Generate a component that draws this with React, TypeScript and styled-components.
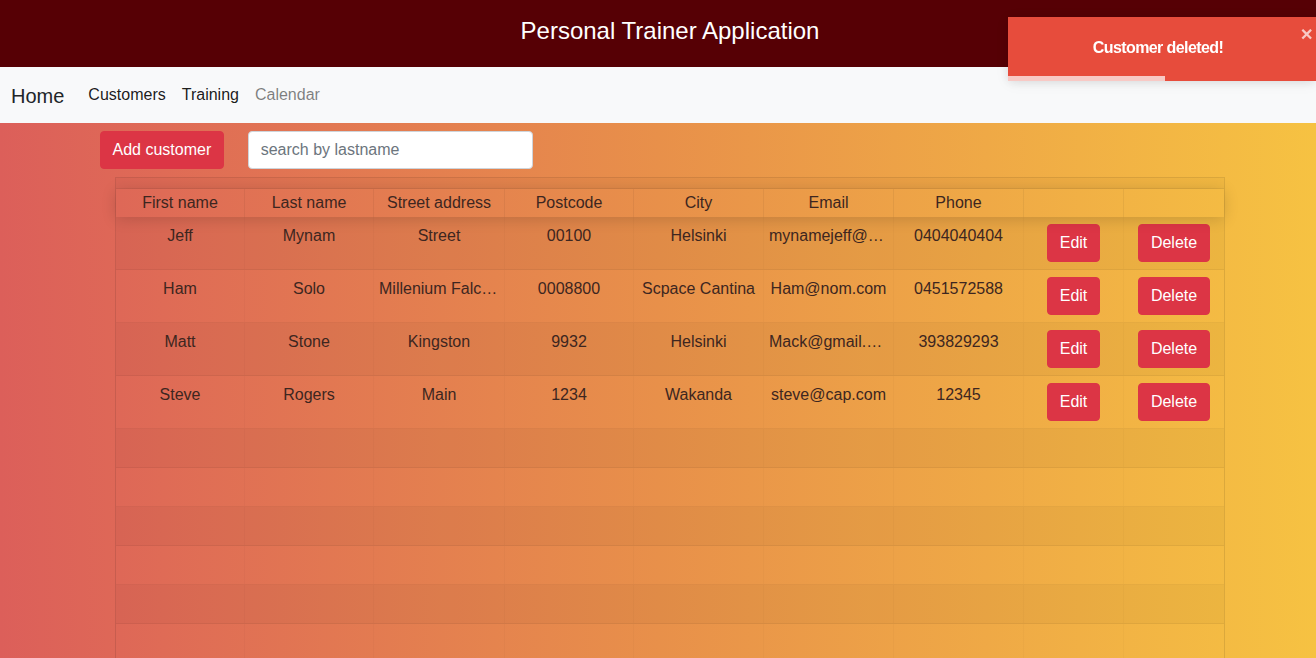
import { FC } from 'react';
import styled, { createGlobalStyle } from 'styled-components';

const GlobalStyle = createGlobalStyle`
  html, body {
    margin: 0;
    padding: 0;
    overflow: hidden;
  }
  body {
    font-family: "Liberation Sans", Arial, sans-serif;
    font-size: 16px;
    color: #212529;
  }
`;

type Customer = {
  firstname: string
  lastname: string
  street: string
  postcode: string
  city: string
  email: string
  phone: string
}

const customers: Customer[] = [
  { firstname: 'Jeff', lastname: 'Mynam', street: 'Street', postcode: '00100', city: 'Helsinki', email: 'mynamejeff@gmail.com', phone: '0404040404' },
  { firstname: 'Ham', lastname: 'Solo', street: 'Millenium Falcon', postcode: '0008800', city: 'Scpace Cantina', email: 'Ham@nom.com', phone: '0451572588' },
  { firstname: 'Matt', lastname: 'Stone', street: 'Kingston', postcode: '9932', city: 'Helsinki', email: 'Mack@gmail.com', phone: '393829293' },
  { firstname: 'Steve', lastname: 'Rogers', street: 'Main', postcode: '1234', city: 'Wakanda', email: 'steve@cap.com', phone: '12345' },
];

const columns = [
  { title: 'First name', width: 129 },
  { title: 'Last name', width: 129 },
  { title: 'Street address', width: 131 },
  { title: 'Postcode', width: 129 },
  { title: 'City', width: 130 },
  { title: 'Email', width: 130 },
  { title: 'Phone', width: 130 },
  { title: '', width: 100 },
  { title: '', width: 100 },
];

const Page = styled.div`
  min-height: 100vh;
  background: linear-gradient(to right, #dc5f5a 0%, #e8904a 50%, #f6c242 100%);
`;

const Header = styled.header`
  height: 67px;
  background-color: #560005;
  display: flex;
  align-items: center;
  justify-content: center;
  padding-left: 24px;
  box-sizing: border-box;

  h1 {
    margin: 0 0 6px;
    font-size: 24px;
    font-weight: 400;
    color: #ffffff;
  }
`;

const NavBar = styled.nav`
  height: 56px;
  background-color: #f8f9fa;
  display: flex;
  align-items: center;
  padding-left: 11px;

  .brand {
    font-size: 20px;
    color: #212529;
    margin-right: 16px;
    padding-top: 2px;
  }
`;

const NavLink = styled.a<{ $muted?: boolean }>`
  padding: 0 8px;
  font-size: 16px;
  color: ${ (p) => (p.$muted ? 'rgba(0,0,0,.5)' : 'rgba(0,0,0,.9)') };
  text-decoration: none;
`;

const Content = styled.main`
  padding-top: 8px;
`;

const Toolbar = styled.div`
  display: flex;
  gap: 24px;
  margin-left: 100px;
`;

const Button = styled.button`
  background-color: #dc3545;
  border: 1px solid #dc3545;
  color: #fff;
  border-radius: 4px;
  font-family: inherit;
  font-size: 16px;
  line-height: 24px;
  padding: 6px 11.5px;
  height: 38px;
  cursor: pointer;
`;

const SearchInput = styled.input`
  width: 285px;
  height: 38px;
  box-sizing: border-box;
  border: 1px solid #ced4da;
  border-radius: 4px;
  padding: 6px 12px;
  font-family: inherit;
  font-size: 16px;
  color: #495057;
  &::placeholder {
    color: #6c757d;
  }
`;

const Table = styled.div`
  margin: 8px 0 0 115px;
  width: 1110px;
  box-sizing: border-box;
  border: 1px solid rgba(0,0,0,.1);
  color: #3d2620;
`;

const GroupStrip = styled.div`
  height: 10px;
  border-bottom: 1px solid rgba(0,0,0,.06);
  background: rgba(0,0,0,.02);
`;

const HeadRow = styled.div`
  display: flex;
  height: 28px;
  box-shadow: 0 2px 15px 0 rgba(0,0,0,.15);
  position: relative;
  z-index: 1;
`;

const HeadCell = styled.div<{ $width: number }>`
  width: ${ (p) => p.$width }px;
  flex: none;
  box-sizing: border-box;
  padding: 4px 5px;
  text-align: center;
  line-height: 20px;
  border-right: 1px solid rgba(0,0,0,.05);
  &:last-child { border-right: none; }
`;

const Row = styled.div<{ $striped: boolean }>`
  display: flex;
  border-bottom: 1px solid rgba(0,0,0,.05);
  background: ${ (p) => (p.$striped ? 'rgba(0,0,0,.03)' : 'transparent') };
`;

const Cell = styled.div<{ $width: number }>`
  width: ${ (p) => p.$width }px;
  flex: none;
  box-sizing: border-box;
  padding: 7px 5px;
  text-align: center;
  line-height: 24px;
  min-height: 38px;
  white-space: nowrap;
  overflow: hidden;
  text-overflow: ellipsis;
  border-right: 1px solid rgba(0,0,0,.02);
  &:last-child { border-right: none; }
`;

const ButtonCell = styled(Cell)`
  display: flex;
  justify-content: center;
  align-items: flex-start;
  padding: 7px 0;
`;

const Toast = styled.div`
  position: fixed;
  top: 17px;
  left: 1008px;
  width: 308px;
  height: 64px;
  background-color: #e74c3c;
  color: #fff;
  box-shadow: 0 1px 10px 0 rgba(0,0,0,.1), 0 2px 15px 0 rgba(0,0,0,.05);
  display: flex;
  align-items: center;
  justify-content: center;
  font-weight: 700;
  font-size: 16px;
  letter-spacing: -0.6px;
  padding: 0 8px 2px 0;
  box-sizing: border-box;
  z-index: 10;

  .close {
    position: absolute;
    top: 10px;
    right: 4px;
    font-size: 16px;
    line-height: 1;
    opacity: .7;
  }

  .progress {
    position: absolute;
    left: 0;
    bottom: 0;
    height: 5px;
    background: rgba(255,255,255,.7);
  }
`;

const EmptyRows = 6;

const App: FC = () => {
  const progress = 157;
  return (
    <Page>
      <GlobalStyle />
      <Header>
        <h1>Personal Trainer Application</h1>
      </Header>
      <NavBar>
        <span className="brand">Home</span>
        <NavLink>Customers</NavLink>
        <NavLink>Training</NavLink>
        <NavLink $muted>Calendar</NavLink>
      </NavBar>
      <Content>
        <Toolbar>
          <Button>Add customer</Button>
          <SearchInput placeholder="search by lastname" />
        </Toolbar>
        <Table>
          <GroupStrip />
          <HeadRow>
            { columns.map((c, i) => (
              <HeadCell key={ i } $width={ c.width }>{ c.title }</HeadCell>
            )) }
          </HeadRow>
          { customers.map((c, i) => (
            <Row key={ i } $striped={ i % 2 === 0 }>
              <Cell $width={ columns[0].width }>{ c.firstname }</Cell>
              <Cell $width={ columns[1].width }>{ c.lastname }</Cell>
              <Cell $width={ columns[2].width }>{ c.street }</Cell>
              <Cell $width={ columns[3].width }>{ c.postcode }</Cell>
              <Cell $width={ columns[4].width }>{ c.city }</Cell>
              <Cell $width={ columns[5].width }>{ c.email }</Cell>
              <Cell $width={ columns[6].width }>{ c.phone }</Cell>
              <ButtonCell $width={ columns[7].width }><Button>Edit</Button></ButtonCell>
              <ButtonCell $width={ columns[8].width }><Button>Delete</Button></ButtonCell>
            </Row>
          )) }
          { Array.from({ length: EmptyRows }).map((_, i) => (
            <Row key={ `pad${i}` } $striped={ i % 2 === 0 }>
              { columns.map((c, j) => (
                <Cell key={ j } $width={ c.width }>&nbsp;</Cell>
              )) }
            </Row>
          )) }
        </Table>
      </Content>
      <Toast>
        Customer deleted!
        <span className="close">✕</span>
        <div className="progress" style={ { width: progress } } />
      </Toast>
    </Page>
  );
};

export default App;
